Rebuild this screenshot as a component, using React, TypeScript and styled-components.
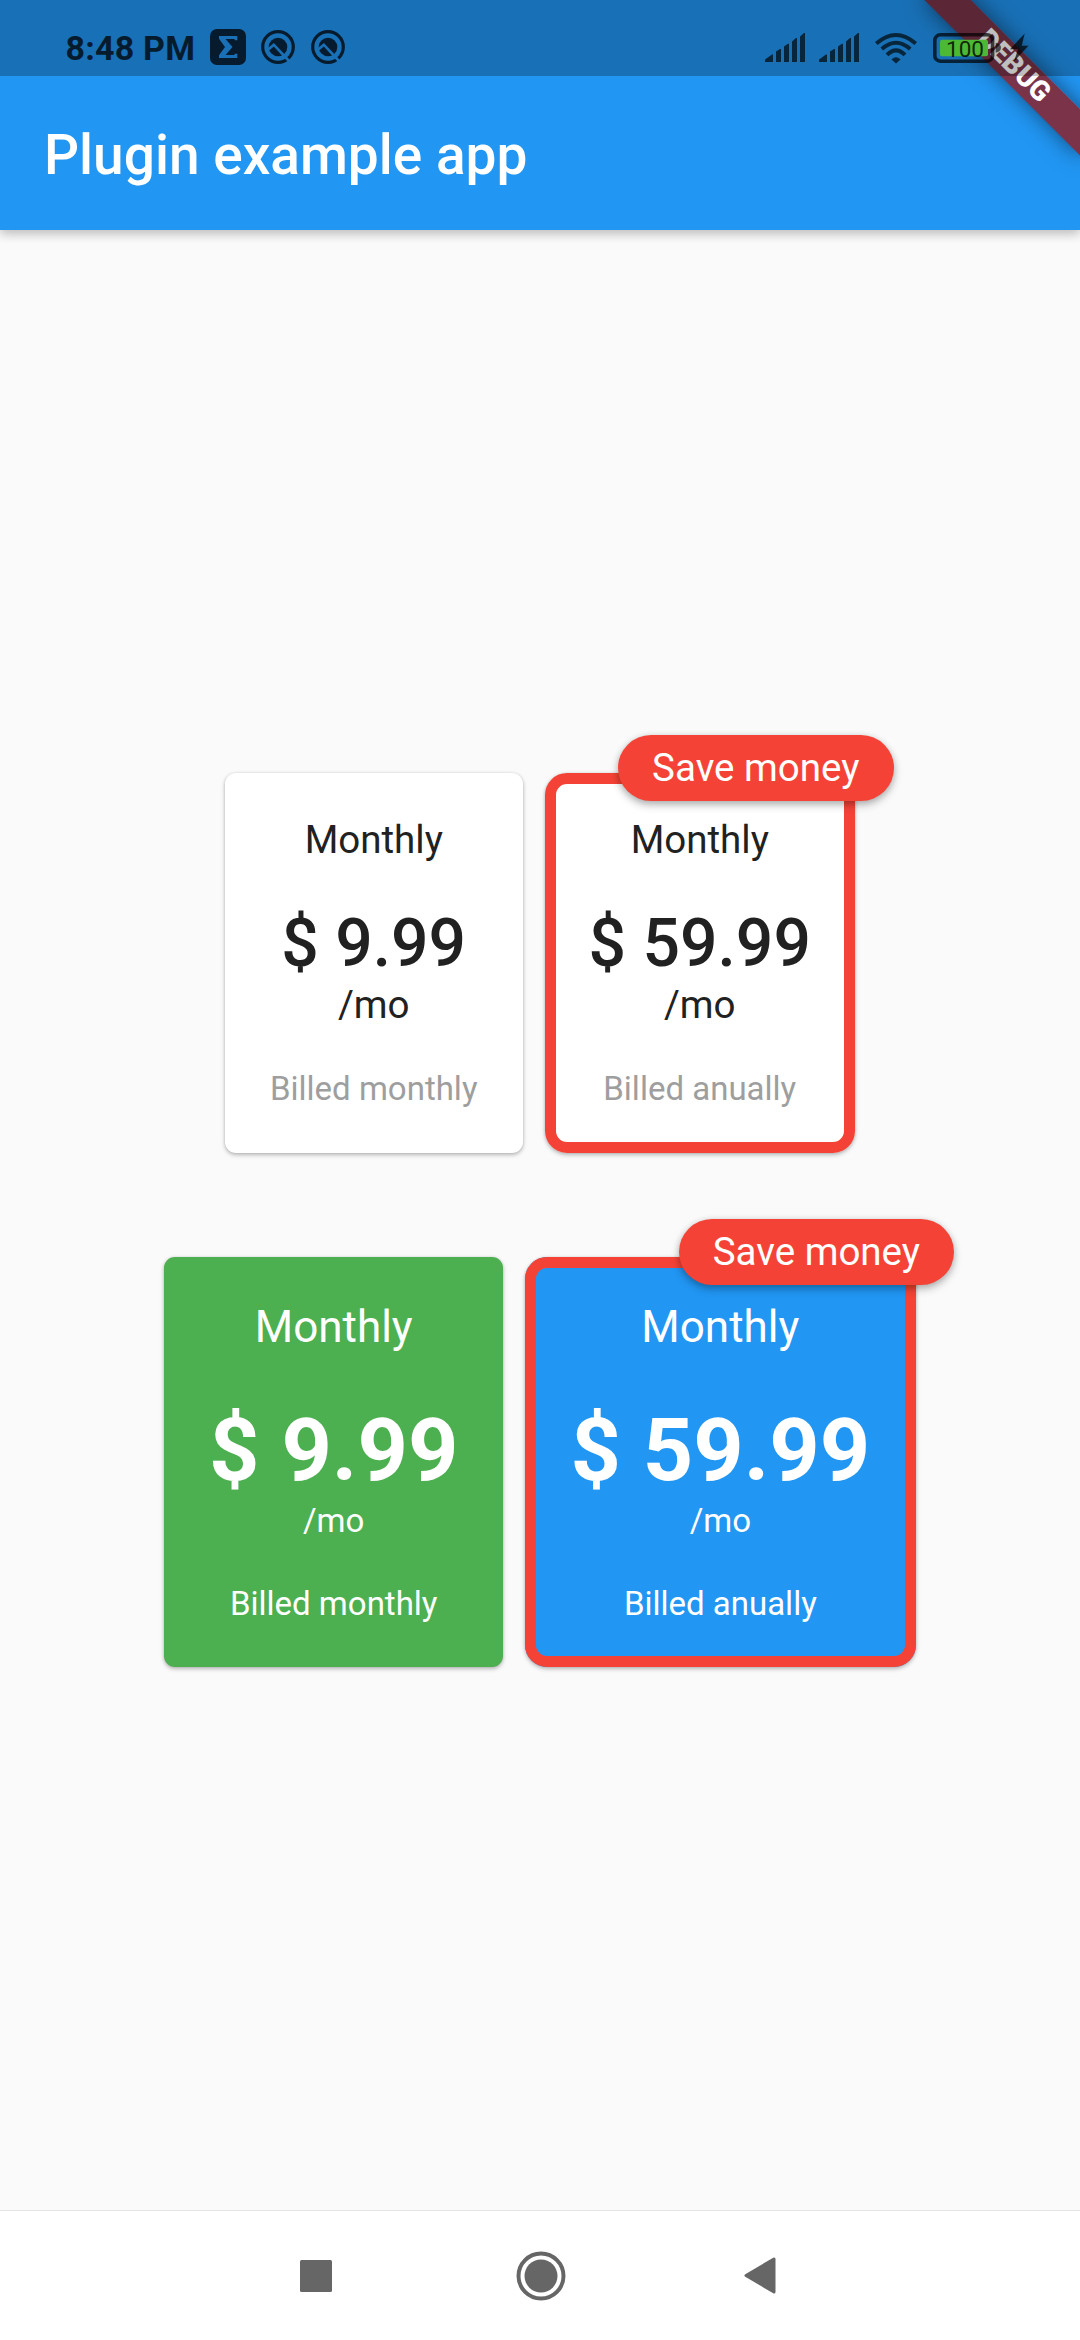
import React from "react";
import styled, { createGlobalStyle } from "styled-components";

const GlobalStyle = createGlobalStyle`
  * { box-sizing: border-box; }
  html, body { margin: 0; padding: 0; }
  body { background: #fafafa; font-family: Roboto, "Liberation Sans", sans-serif; overflow: hidden; }
`;

const Screen = styled.div`
  position: relative;
  width: 1080px;
  height: 2340px;
  display: flex;
  flex-direction: column;
  overflow: hidden;
  background: #fafafa;
`;

const Header = styled.header`
  flex: none;
  height: 230px;
  background: #2196f3;
  box-shadow: 0 4px 10px rgba(0, 0, 0, 0.2), 0 2px 12px rgba(0, 0, 0, 0.08);
`;

const StatusBar = styled.div`
  position: relative;
  z-index: 2;
  height: 76px;
  display: flex;
  align-items: flex-start;
  justify-content: space-between;
  padding: 29px 51px 0 65px;
  background: rgba(0, 0, 0, 0.25);
`;

const StatusGroup = styled.div<{ $height: number }>`
  display: flex;
  align-items: center;
  height: ${(p) => p.$height}px;
`;

const Clock = styled.span`
  width: 129.5px;
  margin: 0 15px 0 0.5px;
  padding-top: 2px;
  font-size: 34px;
  font-weight: 700;
  line-height: 36px;
  letter-spacing: 0.2px;
  white-space: nowrap;
  color: #061c2e;
`;

const Glyph = styled.svg<{ $gap?: number }>`
  display: block;
  flex: none;
  overflow: visible;
  margin-right: ${(p) => p.$gap ?? 0}px;
`;

const TitleBar = styled.div`
  height: 154px;
  display: flex;
  align-items: center;
  padding: 4px 44px 0;
`;

const Title = styled.h1`
  margin: 0;
  font-size: 55px;
  font-weight: 500;
  line-height: 64px;
  color: #fff;
`;

const RibbonLayer = styled.div`
  position: absolute;
  top: 0;
  right: 0;
  width: 300px;
  height: 300px;
  overflow: hidden;
  z-index: 1;
`;

const Ribbon = styled.div`
  position: absolute;
  top: 77px;
  left: 190px;
  width: 220px;
  height: 33px;
  padding-bottom: 2px;
  transform-origin: 110px -77px;
  transform: rotate(45deg);
  display: flex;
  align-items: center;
  justify-content: center;
  background: rgba(148, 23, 23, 0.776);
  box-shadow: 0 0 22px rgba(0, 0, 0, 0.5);
  color: #fff;
  font-size: 28px;
  font-weight: 900;
  line-height: 28px;
`;

const Body = styled.main`
  flex: 1;
  display: flex;
  flex-direction: column;
  align-items: center;
  justify-content: center;
  gap: 104.5px;
`;

const PlanRow = styled.section<{ $height: number }>`
  display: flex;
  gap: 22px;
  height: ${(p) => p.$height}px;
`;

type Tone = { bg: string; ink: string; muted: string };

const Card = styled.article<{ $tone: Tone; $selected?: boolean; $width: number }>`
  position: relative;
  width: ${(p) => p.$width}px;
  padding-top: 44px;
  display: flex;
  flex-direction: column;
  align-items: center;
  border-radius: ${(p) => (p.$selected ? 22 : 11)}px;
  background: ${(p) => p.$tone.bg};
  color: ${(p) => p.$tone.ink};
  box-shadow: 0 2px 4px rgba(0, 0, 0, 0.26), 0 0 3px rgba(0, 0, 0, 0.1);

  &::after {
    content: "";
    display: ${(p) => (p.$selected ? "block" : "none")};
    position: absolute;
    inset: 0;
    border: 11px solid #f44336;
    border-radius: 22px;
  }
`;

const Text = styled.div<{ $size: number; $line: number; $weight?: number; $top?: number; $color?: string }>`
  margin-top: ${(p) => p.$top ?? 0}px;
  font-size: ${(p) => p.$size}px;
  line-height: ${(p) => p.$line}px;
  font-weight: ${(p) => p.$weight ?? 400};
  color: ${(p) => p.$color ?? "inherit"};
  white-space: nowrap;
`;

const Badge = styled.div`
  position: absolute;
  z-index: 1;
  top: -38.5px;
  right: -38.5px;
  width: 275.5px;
  height: 66px;
  display: flex;
  align-items: center;
  justify-content: center;
  border-radius: 33px;
  background: #f44336;
  color: #fff;
  font-size: 38.5px;
  line-height: 45px;
  white-space: nowrap;
  box-shadow: 0 4px 8px rgba(0, 0, 0, 0.26), 0 1px 6px rgba(0, 0, 0, 0.12);
`;

const NavBar = styled.nav`
  flex: none;
  height: 130px;
  display: flex;
  align-items: center;
  padding-left: 300px;
  border-top: 1px solid #e3e3e3;
  background: #fff;
`;

const INK = "#061c2e";
const SIGNAL_INK = "#08263b";

const Sigma = () => (
  <Glyph width="36" height="36" viewBox="0 0 36 36" $gap={15}>
    <rect width="36" height="36" rx="7" fill={INK} />
    <path d="M9 7h18.300v4.300h-2L24 10h-8.500l7 8-7 8H24l1.300-1.300h2V29H9v-2.800l6-8.200-6-8.200z" fill="#1a70b6" />
  </Glyph>
);

const Lens = ({ gap }: { gap: number }) => (
  <Glyph width="34" height="34" viewBox="0 0 34 34" $gap={gap}>
    <circle cx="17" cy="17" r="15.300" fill="none" stroke={INK} strokeWidth="3.200" />
    <circle cx="17" cy="17" r="9.300" fill={INK} />
    <path d="M7 19.800l5.800-5.100 15.200 16.300" fill="none" stroke="#1a70b6" strokeWidth="2.600" />
  </Glyph>
);

const Signal = ({ gap }: { gap: number }) => (
  <Glyph width="41" height="30" viewBox="0 0 41 30" $gap={gap}>
    <path
      d="M0 29V26.500L7 21.500h1V29zM11 29V18.500L15 16h1v13zM19 29V13.500L23 10.700h1V29zM27 29V8.500L31 5h1v24zM35 29V3.500L39 0h1v29z"
      fill={SIGNAL_INK}
    />
  </Glyph>
);

const Wifi = () => (
  <Glyph width="42" height="30" viewBox="0 0 42 30" $gap={16}>
    <g fill="none" stroke={SIGNAL_INK} strokeWidth="4">
      <path d="M1.300 10.500Q21-6.500 40.700 10.500" />
      <path d="M6.800 16Q21 3.500 35.200 16" />
      <path d="M12 21.800Q21 12.800 30 21.800" />
    </g>
    <path d="M16.500 26.500q4.500-4.500 9 0L21 30.500z" fill={SIGNAL_INK} />
  </Glyph>
);

const Battery = () => (
  <Glyph width="96" height="30" viewBox="0 0 96 30">
    <rect x="1.800" y="1.800" width="57.800" height="26.400" rx="5.500" fill="none" stroke="rgba(0,0,0,.7)" strokeWidth="3.600" />
    <rect x="7" y="6.700" width="48" height="16.500" rx="2" fill="#4cb833" />
    <path d="M62.700 9.700q5.300 1 5.300 5t-5.300 5z" fill="rgba(0,0,0,.6)" />
    <text x="32" y="23.700" textAnchor="middle" fontSize="22.500" fill="rgba(0,0,0,.8)">
      100
    </text>
    <path d="M91.700.500L77 16.300h8L81 28.500l14.500-15.800h-6.800z" fill="rgba(0,0,0,.7)" />
  </Glyph>
);

const lightTone: Tone = { bg: "#fff", ink: "#212121", muted: "#9e9e9e" };
const greenTone: Tone = { bg: "#4caf50", ink: "#fff", muted: "#fff" };
const blueTone: Tone = { bg: "#2196f3", ink: "#fff", muted: "#fff" };

type PlanProps = {
  tone: Tone;
  price: string;
  note: string;
  width: number;
  large?: boolean;
  badge?: string;
};

const Plan = ({ tone, price, note, width, large, badge }: PlanProps) => (
  <Card $tone={tone} $selected={!!badge} $width={width}>
    <Text $size={large ? 44 : 38.5} $line={large ? 52 : 45}>Monthly</Text>
    <Text $size={large ? 88 : 66} $line={large ? 103 : 77} $weight={large ? 700 : 500} $top={large ? 45 : 43}>
      {price}
    </Text>
    <Text $size={large ? 33 : 38.5} $line={large ? 39 : 45}>/mo</Text>
    <Text $size={33} $line={39} $top={large ? 44 : 42} $color={tone.muted}>{note}</Text>
    {badge && <Badge>{badge}</Badge>}
  </Card>
);

export default function App() {
  return (
    <Screen>
      <GlobalStyle />
      <Header>
        <StatusBar>
          <StatusGroup $height={36}>
            <Clock>8:48 PM</Clock>
            <Sigma />
            <Lens gap={16} />
            <Lens gap={0} />
          </StatusGroup>
          <StatusGroup $height={38}>
            <Signal gap={13} />
            <Signal gap={15} />
            <Wifi />
            <Battery />
          </StatusGroup>
        </StatusBar>
        <TitleBar>
          <Title>Plugin example app</Title>
        </TitleBar>
      </Header>
      <RibbonLayer>
        <Ribbon>DEBUG</Ribbon>
      </RibbonLayer>
      <Body>
        <PlanRow $height={379.5}>
          <Plan tone={lightTone} price="$ 9.99" note="Billed monthly" width={297.5} />
          <Plan tone={lightTone} price="$ 59.99" note="Billed anually" width={310.5} badge="Save money" />
        </PlanRow>
        <PlanRow $height={410}>
          <Plan large tone={greenTone} price="$ 9.99" note="Billed monthly" width={338.7} />
          <Plan large tone={blueTone} price="$ 59.99" note="Billed anually" width={390.6} badge="Save money" />
        </PlanRow>
      </Body>
      <NavBar>
        <Glyph width="32" height="32" viewBox="0 0 32 32" $gap={183.5}>
          <rect width="32" height="32" rx="1.500" fill="#666" />
        </Glyph>
        <Glyph width="50" height="50" viewBox="0 0 50 50" $gap={178.5}>
          <circle cx="25" cy="25" r="22.500" fill="none" stroke="#666" strokeWidth="4" />
          <circle cx="25" cy="25" r="16.500" fill="#666" />
        </Glyph>
        <Glyph width="32" height="37" viewBox="0 0 32 37">
          <path d="M2 18.500L30 2v33z" fill="#666" stroke="#666" strokeWidth="3" strokeLinejoin="round" />
        </Glyph>
      </NavBar>
    </Screen>
  );
}
